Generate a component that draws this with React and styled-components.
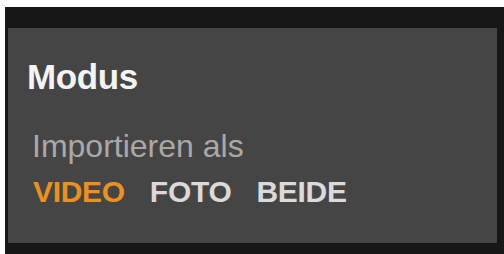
import styled, { createGlobalStyle } from "styled-components"

const Global = createGlobalStyle`
  html, body {
    margin: 0;
    padding: 0;
    background: #ffffff;
    overflow: hidden;
  }
`

const Frame = styled.div`
  margin: 7px 0 0 5px;
  background: #171717;
  padding: 21px 7px 11px 3px;
  font-family: "Liberation Sans", Arial, sans-serif;
`

const Panel = styled.div`
  background: #454545;
  height: 215px;
  box-sizing: border-box;
  padding: 31px 0 0 19px;
`

const Title = styled.div`
  color: #f4f4f4;
  font-weight: bold;
  font-size: 35px;
  line-height: 35px;
  letter-spacing: -0.4px;
`

const Group = styled.div`
  margin: 36px 0 0 5px;
`

const Label = styled.div`
  color: #a9a9a9;
  font-size: 32px;
  line-height: 32px;
`

const Options = styled.div`
  display: flex;
  gap: 25px;
  margin-top: 15px;
  margin-left: 1px;
`

const Option = styled.span`
  font-weight: bold;
  font-size: 30px;
  line-height: 30px;
  letter-spacing: -0.3px;
  color: ${(p) => (p.$active ? "#ec901f" : "#dadada")};
`

const modes = ["VIDEO", "FOTO", "BEIDE"]

export default function App() {
  return (
    <>
      <Global />
      <Frame>
        <Panel>
          <Title>Modus</Title>
          <Group>
            <Label>Importieren als</Label>
            <Options>
              {modes.map((m, i) => (
                <Option key={m} $active={i === 0}>
                  {m}
                </Option>
              ))}
            </Options>
          </Group>
        </Panel>
      </Frame>
    </>
  )
}
